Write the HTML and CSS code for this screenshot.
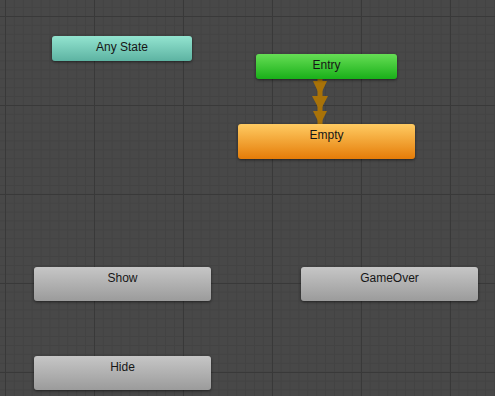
FILE: index.html
```html
<!DOCTYPE html>
<html lang="en">
<head>
  <meta charset="UTF-8" />
  <title>Animator</title>
  <link rel="stylesheet" href="styles.css">
</head>
<body>

  <main class="graph">
    <svg class="transition" width="495" height="396" viewBox="0 0 495 396">
      <line x1="320" y1="79" x2="320" y2="124" stroke="#a87208" stroke-width="5" />
      <polygon points="313,81 327,81 320,96" fill="#a87208" />
      <polygon points="312,96 328,96 320,111" fill="#a87208" />
      <polygon points="313,111 327,111 320,125" fill="#a87208" />
    </svg>

    <div class="node any-state" style="left:52px;top:36px;width:140px;height:25px">Any State</div>
    <div class="node entry" style="left:256px;top:54px;width:141px;height:25px">Entry</div>
    <div class="node default" style="left:238px;top:124px;width:177px;height:35px">Empty</div>
    <div class="node state" style="left:34px;top:267px;width:177px;height:34px">Show</div>
    <div class="node state" style="left:301px;top:267px;width:177px;height:34px">GameOver</div>
    <div class="node state" style="left:34px;top:356px;width:177px;height:34px">Hide</div>
  </main>

</body>
</html>
```

FILE: styles.css
```css
* {
  margin: 0;
  padding: 0;
  box-sizing: border-box;
  font-family: "Liberation Sans", Arial, sans-serif;
}

body {
  width: 495px;
  height: 396px;
  overflow: hidden;
  background-color: #484848;
}

.graph {
  position: relative;
  width: 495px;
  height: 396px;
  background-color: #484848;
  background-image:
    linear-gradient(to right, #393939 1px, transparent 1px),
    linear-gradient(to bottom, #393939 1px, transparent 1px),
    linear-gradient(to right, #434343 1px, transparent 1px),
    linear-gradient(to bottom, #434343 1px, transparent 1px);
  background-size: 89px 89px, 89px 89px, 8.9px 8.9px, 8.9px 8.9px;
  background-position: 5px 16px, 5px 16px, 5px 16px, 5px 16px;
}

.transition {
  position: absolute;
  left: 0;
  top: 0;
}

.node {
  position: absolute;
  border-radius: 3px;
  font-size: 12px;
  line-height: 23px;
  text-align: center;
  color: #161616;
  box-shadow: 0 1px 3px rgba(0, 0, 0, 0.55);
}

.any-state {
  background: linear-gradient(to bottom, #93e4d0, #5db3a2);
}

.entry {
  background: linear-gradient(to bottom, #66de55, #19b019);
}

.default {
  background: linear-gradient(to bottom, #ffcb62, #e57c08);
}

.state {
  background: linear-gradient(to bottom, #c6c6c6, #9b9b9b);
}
```
